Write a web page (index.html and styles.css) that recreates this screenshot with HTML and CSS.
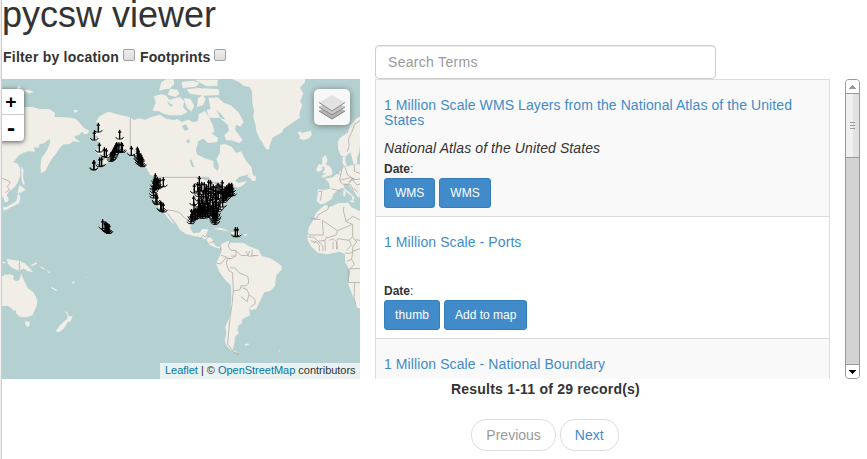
FILE: index.html
```html
<!DOCTYPE html>
<html lang="en">
<head>
<meta charset="utf-8">
<title>pycsw viewer</title>
<link rel="stylesheet" href="styles.css">
</head>
<body>
<div class="page">
  <h1>pycsw viewer</h1>
  <div class="columns">
    <section class="map-column">
      <div class="filters">
        <label>Filter by location <input type="checkbox"></label>
        <label class="footprints">Footprints <input type="checkbox"></label>
      </div>
      <div class="map">
        <svg class="world" viewBox="6 3 1074 900">
          <g class="land">
            <path d="M0 112L6 108 12 98 24 96 30 103 48 102 52 94 70 94 74 87 100 88 118 93 150 94 165 106 164 117 190 118 215 119 228 124 240 136 252 150 268 158 262 168 254 169 246 161 237 171 223 174 226 181 241 193 219 190 208 199 190 199 179 211 169 226 158 239 148 255 136 279 123 286 121 268 124 241 142 215 151 191 148 183 132 196 118 199 117 209 102 208 105 221 86 220 70 224 57 232 47 244 40 251 54 259 61 273 61 290 54 312 43 328 26 342 20 351 26 363 24 371 14 372 10 359 0 351z"/>
            <path d="M64 264l7 12-2 22 6 23-7-2-4-20zM59 321l13 10 5 5-15 8-10 0zM55 344l6 14-3 17-15 8-15 7-10 7-6-6 17-9 20-13zM10 385l8 4-4 9-5-4zM219 98l10-3 6 4-8 5zM56 22l6 5-4 9-8-2zM72 36l14-1 16 7-17 5z"/>
            <path d="M281 169L302 150 288 132 297 116 311 108 325 101 349 108 370 113 390 118 402 126 417 121 435 125 454 117 480 110 499 123 522 126 533 123 545 132 566 125 577 132 593 130 596 109 615 99 627 118 639 143 643 163 623 168 612 181 595 190 588 216 591 229 613 241 640 249 641 267 653 280 657 264 649 244 660 224 660 200 676 198 695 206 708 225 723 220 739 250 755 268 755 282 737 292 718 296 706 308 715 315 727 312 742 310 727 323 712 330 708 325 698 332 690 348 690 360 675 374 665 397 650 410 655 431 652 441 641 423 619 420 596 423 578 425 570 451 580 466 598 464 608 453 625 454 618 470 614 477 629 477 639 486 641 498 653 507 664 504 661 512 644 508 629 500 620 486 601 477 583 474 557 467 539 455 532 441 520 426 504 406 494 395 519 433 524 442 514 432 501 417 485 394 477 390 461 363 453 337 460 313 465 296 450 290 439 270 426 260 410 239 390 225 370 216 352 224 343 236 329 249 304 266 276 278 306 252 315 244 296 231 286 220 292 211 307 203 299 193 282 187 296 177z"/>
            <path d="M484 13l15-9 22 0 1 15-13 13-15 2-17 5zM510 32l22 3 6 12-10 10-25-6zM462 55l22-6 16 4 7 12 33-8 13 13-4 17 14 15-19 10-36 0-20-6-10-6-21-2 10-24zM551 60l21 3 11 20-9 18-15-14zM594 60l15-8 8 12-8 18-18 5zM545 12l33-4 20 6-10 12-40 4zM560 34l38-4 58 4 2 17-48 2-40-6zM585 5l68 0 0 18-33 2-18-10zM625 59l28-1 18 16 21 8 23 20 11 20 5 10-10 14-12-6-4 14 14 20 9 12-10 10-23-9-17 0-5-16 14-12-3-18-25-21-31-1-8-22 12-5zM613 167l17-4 24 17-2 12-28 3-14-14z"/>
            <path d="M696 3L718 13 732 24 749 27 756 39 757 76 762 98 760 118 767 142 769 159 778 181 788 195 797 212 806 216 810 200 817 180 827 173 845 164 852 151 872 138 888 127 900 119 898 105 907 81 900 69 910 47 900 29 914 14 915 3zM892 164l10-4 5 6 11-5 14-2 4 11-9 11-15 5-14-4 2-8z"/>
            <path d="M741 296l14-23 4 19 9 4-2 13-10 0-4-8z"/>
            <path d="M1080 116l-12 6-17 20-8 22-24 16-6 13 2 23 8 17 14 3 14-14 5 18 5 20 11-2-1-18 7-19 2-25zM1028 237l8 0 0 15 6 10-9 2-6-10zM967 239l10-8 6 16-6 12 14 7 7 15-3 10-28 8-2-6 13-5-12-3 8-9-1-9-7-3zM956 259l11 1 0 16-15 7-3-9z"/>
            <path d="M1080 259l-25 2-25 7-12 15-20 15-23 4 12 13 4 17-21 4-16-3-1 14-3 22 11 10 14-3 20-13 6-16 17-13 10-5 13 15 14 10 4 18 5-12-13-15-18-14-3-12 12-2 22 26 11 18 5-8z"/>
            <path d="M1030 340l6-5 1 20-7 0zM1051 367l12 1-2 6-12-4zM1080 400l-27-13-8-13-31 2-22 10-17-5-15 12-13 14-6 18-15 23-4 28 2 12 10 18 19 18 29 5 37-8 16 7 0 24 16 28-6 38 14 38 13 35 9 0z"/>
            <path d="M663 499L684 488 690 494 709 494 731 495 747 505 776 515 785 534 811 541 834 555 845 565 844 576 829 592 825 624 812 638 793 643 783 663 769 692 754 697 747 688 749 703 751 712 734 719 725 726 727 735 716 742 712 756 717 765 705 776 704 792 701 805 698 815 712 822 710 824 693 817 680 803 674 787 679 767 676 747 685 726 692 703 692 684 694 660 693 622 675 605 658 581 648 557 659 534 665 519z"/>
            <path d="M639 453l24-4 26 11-22-3zM691 462l20 0 13 8-23 3zM732 469l9 0-1 4-8 0z"/>
            <path d="M0 600L12 591 30 589 42 593 39 603 49 610 58 606 64 586 69 600 77 617 85 632 100 642 112 665 110 684 97 712 81 718 61 717 49 707 47 696 41 699 34 690 22 683 0 685zM75 730l14 1 0 12-7 4-6-7zM195 698l6 4 5 12 12 1-6 14-9 4-12 19-14 11-10-3 13-18 13-12 9-7 1-9zM20 542l18 4 18 2 18 8 11 10 14 17-17-4-11-8-13 8-21-9-13-13zM5 552l12 0-4 5zM92 562l18-9 1 5-15 6zM117 564l10 3 9 8-6-1zM138 574l12 10-3 2zM155 626l16 10-2 3-14-8zM215 614l8-5 0 8zM255 598l5-1-2 3zM734 799l11-3 2 4-11 3zM833 815l8 5-3 1z"/>
          </g>
          <g class="lakes">
            <path d="M545 145l12-6 9 14-10 6zM559 186l9-2 2 10-10 1zM569 248l5-4 9 22-6 2zM603 296l22 0 8 9-23-2zM630 313l9 0-5 24-7-2zM644 310l15 6-4 14z"/>
            <path d="M602 20l11 6-8 8zM649 96l12 10 15 19-15-5zM500 70l20 12-9 4z"/>
          </g>
          <g class="borders">
            <path d="M391 118V207L410 224M463 298H598L620 305 655 320 666 309M490 394L520 398 539 404 554 420 572 433M58 551V579M7 301L20 306 31 312 22 326 28 336 16 344"/>
            <path d="M602 482l8-11 5 7M616 485l12-9M629 495l13-5M662 506l0 10M690 492l-6 12 9 13 15 1 0 15-13 9-16-2M695 542l-12 0-4 14 8 23 11 5 0 13 2 42 20-4 3-12 14 1 9-9-2-19-27-12-12-14-15-1M700 639l-4 40-6 40-4 44-3 35 9 12 9 12 15 8M649 555l13 3 18-21-17-5M693 534l15 0M708 518l14 14 21 1 6-14M738 520l8 15 20-2M757 516l-2 16 20 1M726 629l15 6 7 16 17 13 0 14-14 9M746 651l-4 20-20-16"/>
            <path d="M1080 128l-16 11-8 22-10 20 1 24-5 16M956 340h10l-5 28M995 332l28 8M1008 281l14 10-3 15 6 11M1022 291l5-26M1035 268l8 23 20 13-17 7M1063 260l0 20 17 6M1020 307l30-8 18 6 12-2M1027 318l24 2 10 18M1045 318l10-15 16 18 9-3M1063 330l10 14"/>
            <path d="M988 381l-5 14-28 15-5 11-18 1M941 424h20M966 426l46 32-2 12-30 10M967 428l3 43-40 0-8-6M1032 386l-2 10 8 35 20 8-46 19M1058 439l0 36-10 12-35-5-3 10M1038 431l20-16 22 11"/>
            <path d="M923 476l18 2 14 12 20-3 5-10M932 488l15 5M940 496l8-6 10 12 0 17M955 490l14 15 0 14M975 488l1 30M988 487l11-5 11 10 0 22M999 491v23M1010 492l3 22M1048 487l6 14-14 16M1058 476l12 16-12 15 0 13 22-8M1035 525l15 1 8-6M1058 520l-3 24-15 6M1055 544l8 15-14 14 31-2M1045 573l0 40 35 1M1064 615l-2 45 5 20M1067 485l13 2"/>
          </g>
          <defs>
            <g id="anchor">
              <path class="anchor-stem" d="M0-31V-2M-5-23.500H5"/>
              <path class="anchor-fluke" d="M-12-9L-7-3H7L12-9"/>
            </g>
          </defs>
          <g id="markers"></g>
        </svg>
        <div class="zoom-control"><a>+</a><a>-</a></div>
        <div class="layer-control">
          <svg viewBox="0 0 26 26">
            <path d="M0 17L13 25 26 17 13 9z" fill="#b5b5b5"/><path d="M0 17L13 25 26 17" fill="none" stroke="#808080"/>
            <path d="M0 13L13 21 26 13 13 5z" fill="#c8c8c8"/><path d="M0 13L13 21 26 13" fill="none" stroke="#858585"/>
            <path d="M0 8.500L13 17 26 8.500 13 1z" fill="#e2e2e2"/><path d="M0 8.500L13 17 26 8.500" fill="none" stroke="#8a8a8a"/>
          </svg>
        </div>
        <div class="attribution"><a>Leaflet</a> | © <a>OpenStreetMap</a> contributors</div>
      </div>
    </section>
    <section class="results-column">
      <input class="search" type="text" placeholder="Search Terms">
      <div class="results">
        <div class="records">
          <article class="record striped">
            <h4>1 Million Scale WMS Layers from the National Atlas of the United States</h4>
            <p class="source">National Atlas of the United States</p>
            <p class="date"><b>Date</b>:</p>
            <div class="actions"><a>WMS</a><a>WMS</a></div>
          </article>
          <article class="record">
            <h4>1 Million Scale - Ports</h4>
            <p class="source"></p>
            <p class="date"><b>Date</b>:</p>
            <div class="actions"><a class="thumbnail">thumb</a><a>Add to map</a></div>
          </article>
          <article class="record striped">
            <h4>1 Million Scale - National Boundary</h4>
          </article>
        </div>
        <div class="scrollbar">
          <div class="arrow"><svg viewBox="0 0 7 4"><path d="M3 0H4V1H5V2H6V3H7V4H0V3H1V2H2V1H3z" fill="#999"/></svg></div>
          <div class="thumb"><i></i><i></i><i></i></div>
          <div class="track"></div>
          <div class="arrow down"><svg viewBox="0 0 7 4"><path d="M0 0H7V1H6V2H5V3H4V4H3V3H2V2H1V1H0z"/></svg></div>
        </div>
      </div>
      <div class="summary">Results 1-11 of 29 record(s)</div>
      <div class="pager"><a class="disabled">Previous</a><a>Next</a></div>
    </section>
  </div>
</div>
<script src="markers.js"></script>
</body>
</html>
```

FILE: styles.css
```css
* { box-sizing: border-box; }
body {
  margin: 0;
  height: 459px;
  overflow: hidden;
  background: #fff;
  color: #333;
  font: 14px/20px "Liberation Sans", Arial, sans-serif;
}
.page {
  height: 459px;
  padding-left: 1px;
  background: linear-gradient(90deg, #f2efee 1px, #fff 1px);
}
.page > * { border-left: 1px solid #ccc; }
h1 {
  margin: 0;
  height: 45px;
  font-size: 36px;
  font-weight: normal;
  line-height: 30px;
}
.columns { display: flex; gap: 15px; height: 414px; }
.map-column { width: 358px; }
.filters {
  display: flex;
  gap: 5px;
  height: 34px;
  padding: 2px 0 0 1px;
  font-weight: bold;
  letter-spacing: .22px;
}
.filters label { display: flex; gap: 4px; white-space: nowrap; }
.filters .footprints { letter-spacing: .12px; }
.filters input {
  appearance: none;
  width: 12px;
  height: 12px;
  margin: 2px 0 0;
  border: 1px solid #a0a0a0;
  border-radius: 2px;
  background: linear-gradient(#eee, #dcdcdc);
}
.map {
  position: relative;
  height: 300px;
  overflow: hidden;
  background: #b5d0d0;
}
.world { display: block; width: 358px; height: 300px; }
.land { fill: #f1eee8; }
.lakes { fill: #b5d0d0; }
.borders { fill: none; stroke: #b3adab; stroke-width: 2.5; }
.anchor-stem { fill: none; stroke: #000; stroke-width: 4; }
.anchor-fluke { fill: none; stroke: #000; stroke-width: 2.8; }
.zoom-control {
  position: absolute;
  top: 10px;
  left: -4px;
  width: 26px;
  border-radius: 4px;
  background: #fff;
  box-shadow: 0 1px 5px rgba(0, 0, 0, .65);
}
.zoom-control a {
  display: block;
  height: 26px;
  color: #000;
  font: bold 18px/26px "DejaVu Sans Mono", monospace;
  text-align: center;
}
.zoom-control a:first-child { border-bottom: 1px solid #ccc; }
.zoom-control a:last-child { font-size: 20px; }
.layer-control {
  position: absolute;
  top: 10px;
  right: 10px;
  width: 36px;
  height: 36px;
  padding: 5px;
  border-radius: 5px;
  background: #f8f8f9;
  box-shadow: 0 1px 7px rgba(0, 0, 0, .4);
}
.layer-control svg { display: block; width: 26px; height: 26px; }
.attribution {
  position: absolute;
  right: 0;
  bottom: 0;
  width: 200px;
  height: 16px;
  padding: 0 5px;
  background: rgba(255, 255, 255, .7);
  font-size: 11px;
  line-height: 15px;
  letter-spacing: -.02px;
  white-space: nowrap;
}
.attribution a { color: #0078a8; }
.results-column { width: 486px; }
.search {
  display: block;
  width: 341px;
  height: 34px;
  padding: 6px 12px;
  border: 1px solid #ccc;
  border-radius: 4px;
  background: #fff;
  box-shadow: inset 0 1px 1px rgba(0, 0, 0, .075);
  font: inherit;
  letter-spacing: .3px;
}
.search::placeholder { color: #999; opacity: 1; }
.results { display: flex; justify-content: space-between; width: 485px; height: 300px; }
.records {
  width: 455px;
  overflow: hidden;
  border: solid #ddd;
  border-width: 0 1px;
}
.record { padding: 18px 8px 8px; border-top: 1px solid #ddd; }
.striped { background: #f9f9f9; }
h4 {
  margin: 0 0 10px;
  color: #428bca;
  font-size: 14px;
  font-weight: normal;
  line-height: 15px;
  letter-spacing: .09px;
}
.record p { height: 20px; margin: 0; }
.source { font-style: italic; letter-spacing: .1px; }
.record .date { padding-top: 1px; font-size: 12px; }
.actions { display: flex; gap: 4px; }
.actions a {
  height: 30px;
  padding: 5px 10px;
  border: 1px solid #357ebd;
  border-radius: 3px;
  background: #428bca;
  color: #fff;
  font-size: 12px;
  line-height: 18px;
}
.actions .thumbnail { width: 56px; letter-spacing: .15px; }
.scrollbar {
  display: flex;
  flex-direction: column;
  width: 15px;
  border: 1px solid #999;
  border-radius: 4px;
  background: #d3d3d3;
  overflow: hidden;
}
.arrow {
  display: flex;
  justify-content: center;
  height: 13px;
  padding-top: 5px;
  background: #fff;
}
.arrow svg { width: 7px; height: 4px; }
.down { height: 14px; border-top: 1px solid #999; }
.thumb {
  display: flex;
  flex-direction: column;
  align-items: center;
  justify-content: center;
  gap: 2px;
  height: 65px;
  border: solid #999;
  border-width: 1px 0;
  background: linear-gradient(90deg, #f0f0f0 7px, #e2e2e2 7px);
}
.thumb i { width: 5px; height: 1px; background: #999; }
.track { flex: 1; }
.summary {
  width: 341px;
  height: 40px;
  font-weight: bold;
  letter-spacing: .22px;
  text-align: center;
}
.pager { display: flex; justify-content: center; gap: 4px; width: 340px; }
.pager a {
  height: 32px;
  padding: 5px 14px;
  border: 1px solid #ddd;
  border-radius: 15px;
  color: #428bca;
}
.pager .disabled { color: #999; }
```

FILE: markers.js
```js
// Foot of each anchor, in the map's view box units, by region.
const alaska = [
  [295, 165], [283, 189], [359, 186], [298, 225], [313, 239], [319, 242], [394, 235],
  [282, 277], [281, 279], [299, 269], [305, 267], [336, 250], [339, 247], [343, 237],
  [345, 233], [348, 227], [350, 223], [354, 227], [357, 224], [364, 223], [367, 226],
  [333, 253], [341, 242], [412, 237], [414, 242], [413, 249], [416, 253], [419, 257],
  [417, 261], [422, 264], [425, 267], [428, 269], [422, 257], [415, 245]
];
const pacific = [
  [466, 317], [463, 329], [465, 333], [470, 331], [475, 335], [480, 331], [490, 329],
  [461, 339], [462, 347], [460, 355], [461, 363], [469, 379], [471, 383], [468, 375],
  [482, 399], [485, 403], [490, 405], [467, 339], [472, 327],
  [308, 455], [315, 461], [318, 462], [320, 465], [322, 467], [325, 469], [327, 469],
  [318, 463], [323, 466]
];
const atlantic = [
  [706, 479], [712, 479],
  [598, 325], [593, 343], [583, 348], [596, 358], [605, 342], [613, 344], [620, 350],
  [626, 336], [632, 338], [640, 350], [648, 352], [654, 345], [667, 338], [660, 350],
  [581, 384], [582, 404], [596, 390], [604, 380], [610, 366], [618, 372], [625, 364],
  [632, 370], [640, 362], [647, 376], [655, 368], [663, 364], [597, 372], [672, 364],
  [668, 372], [675, 356], [680, 353], [685, 350], [690, 348], [695, 345], [692, 354],
  [698, 356], [686, 360], [680, 366], [676, 370], [671, 376], [690, 358], [683, 358],
  [678, 360], [687, 345], [668, 390], [660, 398], [655, 404], [646, 394], [638, 388],
  [630, 396], [622, 390], [615, 400], [608, 396], [602, 406], [640, 402], [626, 404],
  [575, 434], [573, 440], [578, 430], [582, 424], [587, 420], [592, 424], [597, 418],
  [602, 420], [607, 424], [612, 418], [617, 423], [622, 418], [627, 420], [632, 416],
  [585, 428], [595, 414], [605, 412], [615, 412], [622, 410], [610, 408], [600, 410],
  [638, 424], [642, 436], [645, 442], [648, 438], [650, 430], [648, 420], [642, 416],
  [652, 424], [645, 430], [640, 430], [650, 414], [636, 412], [575, 424], [599, 400],
  [666, 350], [646, 362], [633, 356], [620, 382], [650, 385], [600, 352], [616, 360]
];
const ns = "http://www.w3.org/2000/svg";
const layer = document.getElementById("markers");
for (const [x, y] of [...alaska, ...pacific, ...atlantic]) {
  const mark = document.createElementNS(ns, "use");
  mark.setAttribute("href", "#anchor");
  mark.setAttribute("x", x);
  mark.setAttribute("y", y);
  layer.append(mark);
}
```
